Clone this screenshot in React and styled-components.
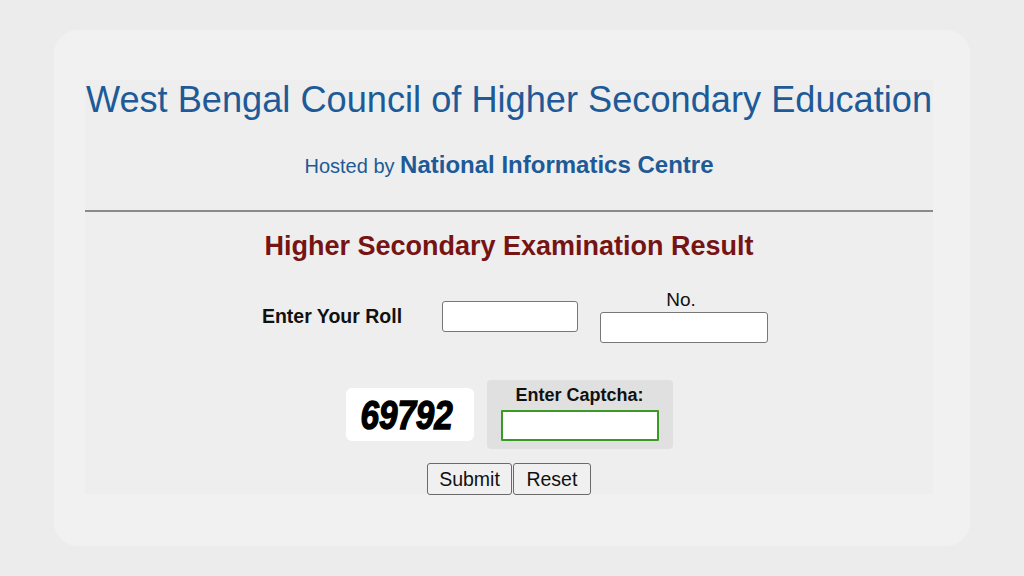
import React from 'react'
import styled, { createGlobalStyle } from 'styled-components'

const Global = createGlobalStyle`
  html, body {
    margin: 0;
    background: #ececec;
    font-family: "Liberation Sans", Arial, sans-serif;
  }
`

const Page = styled.div`
  padding: 30px 54px;
  height: 576px;
  box-sizing: border-box;
`

const Card = styled.div`
  background: #f1f1f1;
  border-radius: 24px;
  height: 516px;
  box-sizing: border-box;
  padding: 50px 37px 0 31px;
`

const Panel = styled.div`
  background: #eeeeee;
  height: 414px;
  display: flex;
  flex-direction: column;
  align-items: center;
`

const Header = styled.div`
  width: 100%;
  text-align: center;
  border-bottom: 2px solid #8a8a8a;
  padding-bottom: 30px;
`

const Title = styled.h1`
  margin: 0;
  font-weight: normal;
  font-size: 36.2px;
  line-height: 40px;
  color: #1d5a97;
`

const Hosted = styled.div`
  margin-top: 31px;
  color: #1d5a97;
  font-size: 20px;
  line-height: 28px;
  b {
    font-size: 24px;
  }
`

const ResultTitle = styled.h2`
  margin: 18px 0 0;
  font-size: 27px;
  line-height: 32px;
  color: #761414;
`

const RollRow = styled.div`
  margin: 27px 0 0 12px;
  display: flex;
  align-items: center;
`

const Label = styled.span`
  font-weight: bold;
  font-size: ${p => p.$size || 19.5}px;
  line-height: 22px;
  color: #111;
`

const Field = styled.input`
  box-sizing: border-box;
  width: ${p => p.$w}px;
  height: 31px;
  background: #fff;
  border: ${p => (p.$green ? '2px solid #3a9a23' : '1px solid #777')};
  border-radius: ${p => (p.$green ? '1px' : '3px')};
  outline: none;
  padding: 0;
`

const RollField = styled(Field)`
  margin-left: 40px;
`

const NoCol = styled.div`
  margin-left: 22px;
  display: flex;
  flex-direction: column;
  align-items: center;
  gap: 1px;
`

const NoLabel = styled.span`
  font-size: 19px;
  line-height: 22px;
  color: #111;
  margin-left: -6px;
`

const CaptchaRow = styled.div`
  margin-top: 37px;
  display: flex;
  align-items: center;
  gap: 13px;
`

const CaptchaImg = styled.div`
  width: 128px;
  height: 53px;
  background: #fff;
  border-radius: 6px;
  display: flex;
  align-items: center;
  justify-content: center;
  span {
    display: inline-block;
    font-size: 40px;
    line-height: 40px;
    font-weight: bold;
    font-style: italic;
    color: #000;
    -webkit-text-stroke: 1.4px #000;
    transform: scaleX(0.83);
    margin-left: -6px;
  }
`

const CaptchaBox = styled.div`
  background: #e0e0e0;
  border-radius: 4px;
  padding: 4px 14px 8px;
  display: flex;
  flex-direction: column;
  align-items: center;
  gap: 4px;
`

const Buttons = styled.div`
  margin-top: 14px;
  display: flex;
  gap: 1px;
`

const Btn = styled.button`
  font-family: "Liberation Sans", Arial, sans-serif;
  font-size: 19.5px;
  height: 32px;
  padding: 0 ${p => p.$pad || 11}px;
  background: #f0f0f0;
  color: #111;
  border: 1px solid #6a6a6a;
  border-radius: 3px;
`

export default function App() {
  return (
    <>
      <Global />
      <Page>
        <Card>
          <Panel>
            <Header>
              <Title>West Bengal Council of Higher Secondary Education</Title>
              <Hosted>
                Hosted by <b>National Informatics Centre</b>
              </Hosted>
            </Header>
            <ResultTitle>Higher Secondary Examination Result</ResultTitle>
            <RollRow>
              <Label>Enter Your Roll</Label>
              <RollField $w={136} />
              <NoCol>
                <NoLabel>No.</NoLabel>
                <Field $w={168} />
              </NoCol>
            </RollRow>
            <CaptchaRow>
              <CaptchaImg>
                <span>69792</span>
              </CaptchaImg>
              <CaptchaBox>
                <Label $size={18}>Enter Captcha:</Label>
                <Field $w={158} $green />
              </CaptchaBox>
            </CaptchaRow>
            <Buttons>
              <Btn>Submit</Btn>
              <Btn $pad={12.5}>Reset</Btn>
            </Buttons>
          </Panel>
        </Card>
      </Page>
    </>
  )
}
